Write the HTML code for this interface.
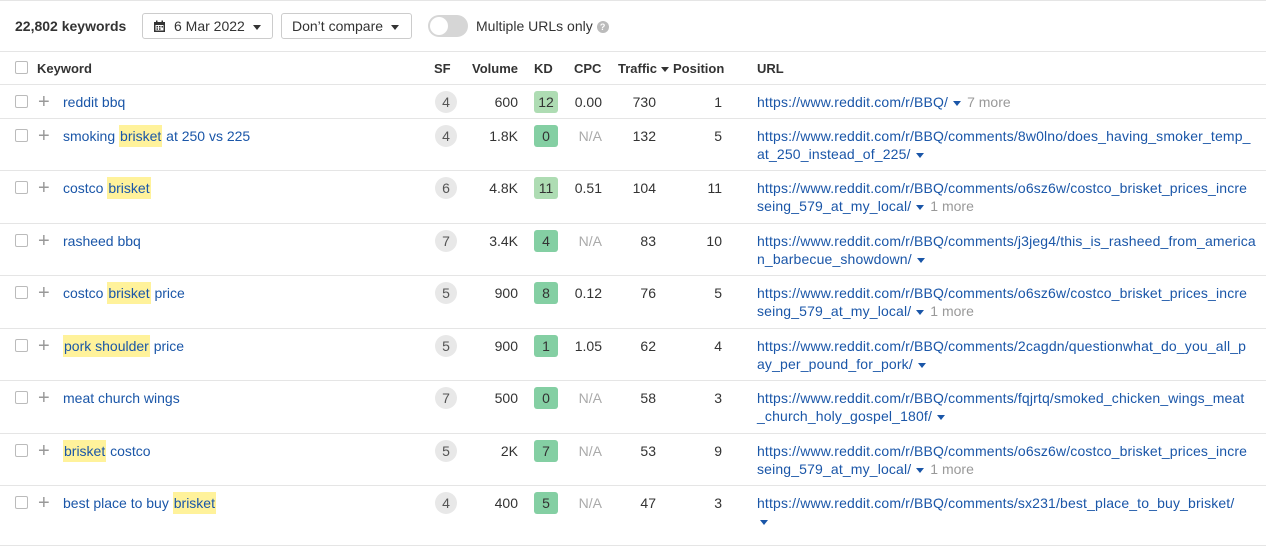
<!DOCTYPE html>
<html><head><meta charset="utf-8"><style>
*{margin:0;padding:0;box-sizing:border-box}
body{width:1266px;height:539px;overflow:hidden;background:#fff;font-family:"Liberation Sans",Arial,sans-serif;font-size:14px;color:#333;position:relative}
.a{position:absolute;white-space:nowrap}
.top{position:absolute;left:0;top:0;width:1266px;height:52px;border-top:1px solid #e5e5e5;border-bottom:1px solid #e5e5e5}
.btn{position:absolute;top:13px;height:26px;border:1px solid #ccc;border-radius:3px;font-size:14px;color:#333;line-height:25px;padding-left:10px}
.tri{display:inline-block;width:0;height:0;border-left:4px solid transparent;border-right:4px solid transparent;border-top:5px solid #333;vertical-align:middle;margin-left:8px}
.row{position:absolute;left:0;width:1266px;border-bottom:1px solid #e5e5e5}
.cb{position:absolute;left:15px;width:13px;height:13px;border:1px solid #bbb;border-radius:2px;background:#fff}
.plus{position:absolute;left:38px;font-size:20px;font-weight:300;color:#999;line-height:18px}
.kw{position:absolute;left:63px;color:#1a56a8;line-height:18px}
.hl{background:#fff29b;padding:3px 1px}
.sf{position:absolute;left:435px;width:22px;height:22px;border-radius:11px;background:#e8e8e8;text-align:center;line-height:22px;color:#555}
.num{position:absolute;text-align:right;line-height:18px}
.kd{position:absolute;left:534px;width:24px;height:22px;border-radius:3px;text-align:center;line-height:22px;color:#333}
.k1{background:#aedcb3}.k2{background:#84cfa3}
.url{position:absolute;left:757px;color:#1a56a8;line-height:18px;letter-spacing:0.15px}
.ut{display:inline-block;width:0;height:0;border-left:4px solid transparent;border-right:4px solid transparent;border-top:5px solid #1a56a8;vertical-align:middle;margin-left:5px}
.more{color:#999;margin-left:6px;letter-spacing:0}
.th{position:absolute;top:61px;font-weight:bold;color:#333;font-size:13px}
</style></head><body>
<div class="top"></div>
<div class="a" style="left:15px;top:18px;font-weight:bold;font-size:14px;color:#333">22,802 keywords</div>
<div class="btn" style="left:142px;width:131px"><svg width="13" height="13" viewBox="0 0 13 13" style="vertical-align:-2px;margin-right:8px"><rect x="1" y="2" width="11" height="10" fill="#333"/><rect x="2.5" y="5" width="8" height="5.5" fill="#fff"/><rect x="3.5" y="6" width="1.5" height="1.5" fill="#333"/><rect x="6" y="6" width="1.5" height="1.5" fill="#333"/><rect x="8.5" y="6" width="1.5" height="1.5" fill="#333"/><rect x="3.5" y="8.3" width="1.5" height="1.5" fill="#333"/><rect x="6" y="8.3" width="1.5" height="1.5" fill="#333"/><rect x="3" y="0.5" width="1.5" height="3" fill="#333"/><rect x="8.5" y="0.5" width="1.5" height="3" fill="#333"/></svg>6 Mar 2022<span class="tri"></span></div>
<div class="btn" style="left:281px;width:131px">Don’t compare<span class="tri"></span></div>
<div class="a" style="left:428px;top:15px;width:40px;height:22px;border-radius:11px;background:#d6d6d6"><div style="position:absolute;left:2px;top:2px;width:18px;height:18px;border-radius:9px;background:#fff"></div></div>
<div class="a" style="left:476px;top:18px;font-size:14px;color:#333">Multiple URLs only <span style="display:inline-block;width:12px;height:12px;border-radius:6px;background:#bbb;color:#fff;font-size:9px;text-align:center;line-height:12px;font-weight:bold;vertical-align:1px">?</span></div>

<div class="row" style="top:52px;height:33px"></div>
<div class="cb" style="top:61px"></div>
<div class="th" style="left:37px">Keyword</div>
<div class="th" style="left:434px">SF</div>
<div class="th" style="left:472px">Volume</div>
<div class="th" style="left:534px">KD</div>
<div class="th" style="left:574px">CPC</div>
<div class="th" style="left:618px">Traffic<span class="tri" style="margin-left:4px;border-top-color:#333"></span></div>
<div class="th" style="left:673px">Position</div>
<div class="th" style="left:757px">URL</div>

<div id="rows"></div>
<script>
var R=[
[85,34,'reddit bbq','4','600',['12','k1'],'0.00','730','1',['https://www.reddit.com/r/BBQ/'],'7 more'],
[119,52,'smoking <span class="hl">brisket</span> at 250 vs 225','4','1.8K',['0','k2'],'N/A','132','5',['https://www.reddit.com/r/BBQ/comments/8w0lno/does_having_smoker_temp_','at_250_instead_of_225/'],''],
[171,53,'costco <span class="hl">brisket</span>','6','4.8K',['11','k1'],'0.51','104','11',['https://www.reddit.com/r/BBQ/comments/o6sz6w/costco_brisket_prices_incre','seing_579_at_my_local/'],'1 more'],
[224,52,'rasheed bbq','7','3.4K',['4','k2'],'N/A','83','10',['https://www.reddit.com/r/BBQ/comments/j3jeg4/this_is_rasheed_from_america','n_barbecue_showdown/'],''],
[276,53,'costco <span class="hl">brisket</span> price','5','900',['8','k2'],'0.12','76','5',['https://www.reddit.com/r/BBQ/comments/o6sz6w/costco_brisket_prices_incre','seing_579_at_my_local/'],'1 more'],
[329,52,'<span class="hl">pork shoulder</span> price','5','900',['1','k2'],'1.05','62','4',['https://www.reddit.com/r/BBQ/comments/2cagdn/questionwhat_do_you_all_p','ay_per_pound_for_pork/'],''],
[381,53,'meat church wings','7','500',['0','k2'],'N/A','58','3',['https://www.reddit.com/r/BBQ/comments/fqjrtq/smoked_chicken_wings_meat','_church_holy_gospel_180f/'],''],
[434,52,'<span class="hl">brisket</span> costco','5','2K',['7','k2'],'N/A','53','9',['https://www.reddit.com/r/BBQ/comments/o6sz6w/costco_brisket_prices_incre','seing_579_at_my_local/'],'1 more'],
[486,60,'best place to buy <span class="hl">brisket</span>','4','400',['5','k2'],'N/A','47','3',['https://www.reddit.com/r/BBQ/comments/sx231/best_place_to_buy_brisket/',''],'']
];
var h='';
R.forEach(function(r){
var t=r[0],y=t+8;
h+='<div class="row" style="top:'+t+'px;height:'+r[1]+'px"></div>';
h+='<div class="cb" style="top:'+(t+10)+'px"></div>';
h+='<div class="plus a" style="top:'+y+'px">+</div>';
h+='<div class="kw a" style="top:'+y+'px">'+r[2]+'</div>';
h+='<div class="sf" style="top:'+(t+6)+'px">'+r[3]+'</div>';
h+='<div class="num" style="left:460px;width:58px;top:'+y+'px">'+r[4]+'</div>';
h+='<div class="kd '+r[5][1]+'" style="top:'+(t+6)+'px">'+r[5][0]+'</div>';
h+='<div class="num" style="left:560px;width:42px;top:'+y+'px;'+(r[6]=='N/A'?'color:#aaa':'')+'">'+r[6]+'</div>';
h+='<div class="num" style="left:600px;width:56px;top:'+y+'px">'+r[7]+'</div>';
h+='<div class="num" style="left:670px;width:52px;top:'+y+'px">'+r[8]+'</div>';
var u=r[9],m=r[10]?'<span class="more">'+r[10]+'</span>':'';
if(u.length==1)h+='<div class="url a" style="top:'+y+'px">'+u[0]+'<span class="ut"></span>'+m+'</div>';
else h+='<div class="url a" style="top:'+y+'px">'+u[0]+'<br>'+u[1]+'<span class="ut"'+(u[1]==''?' style="margin-left:3px"':'')+'></span>'+m+'</div>';
});
document.getElementById('rows').innerHTML=h;
</script>
</body></html>
